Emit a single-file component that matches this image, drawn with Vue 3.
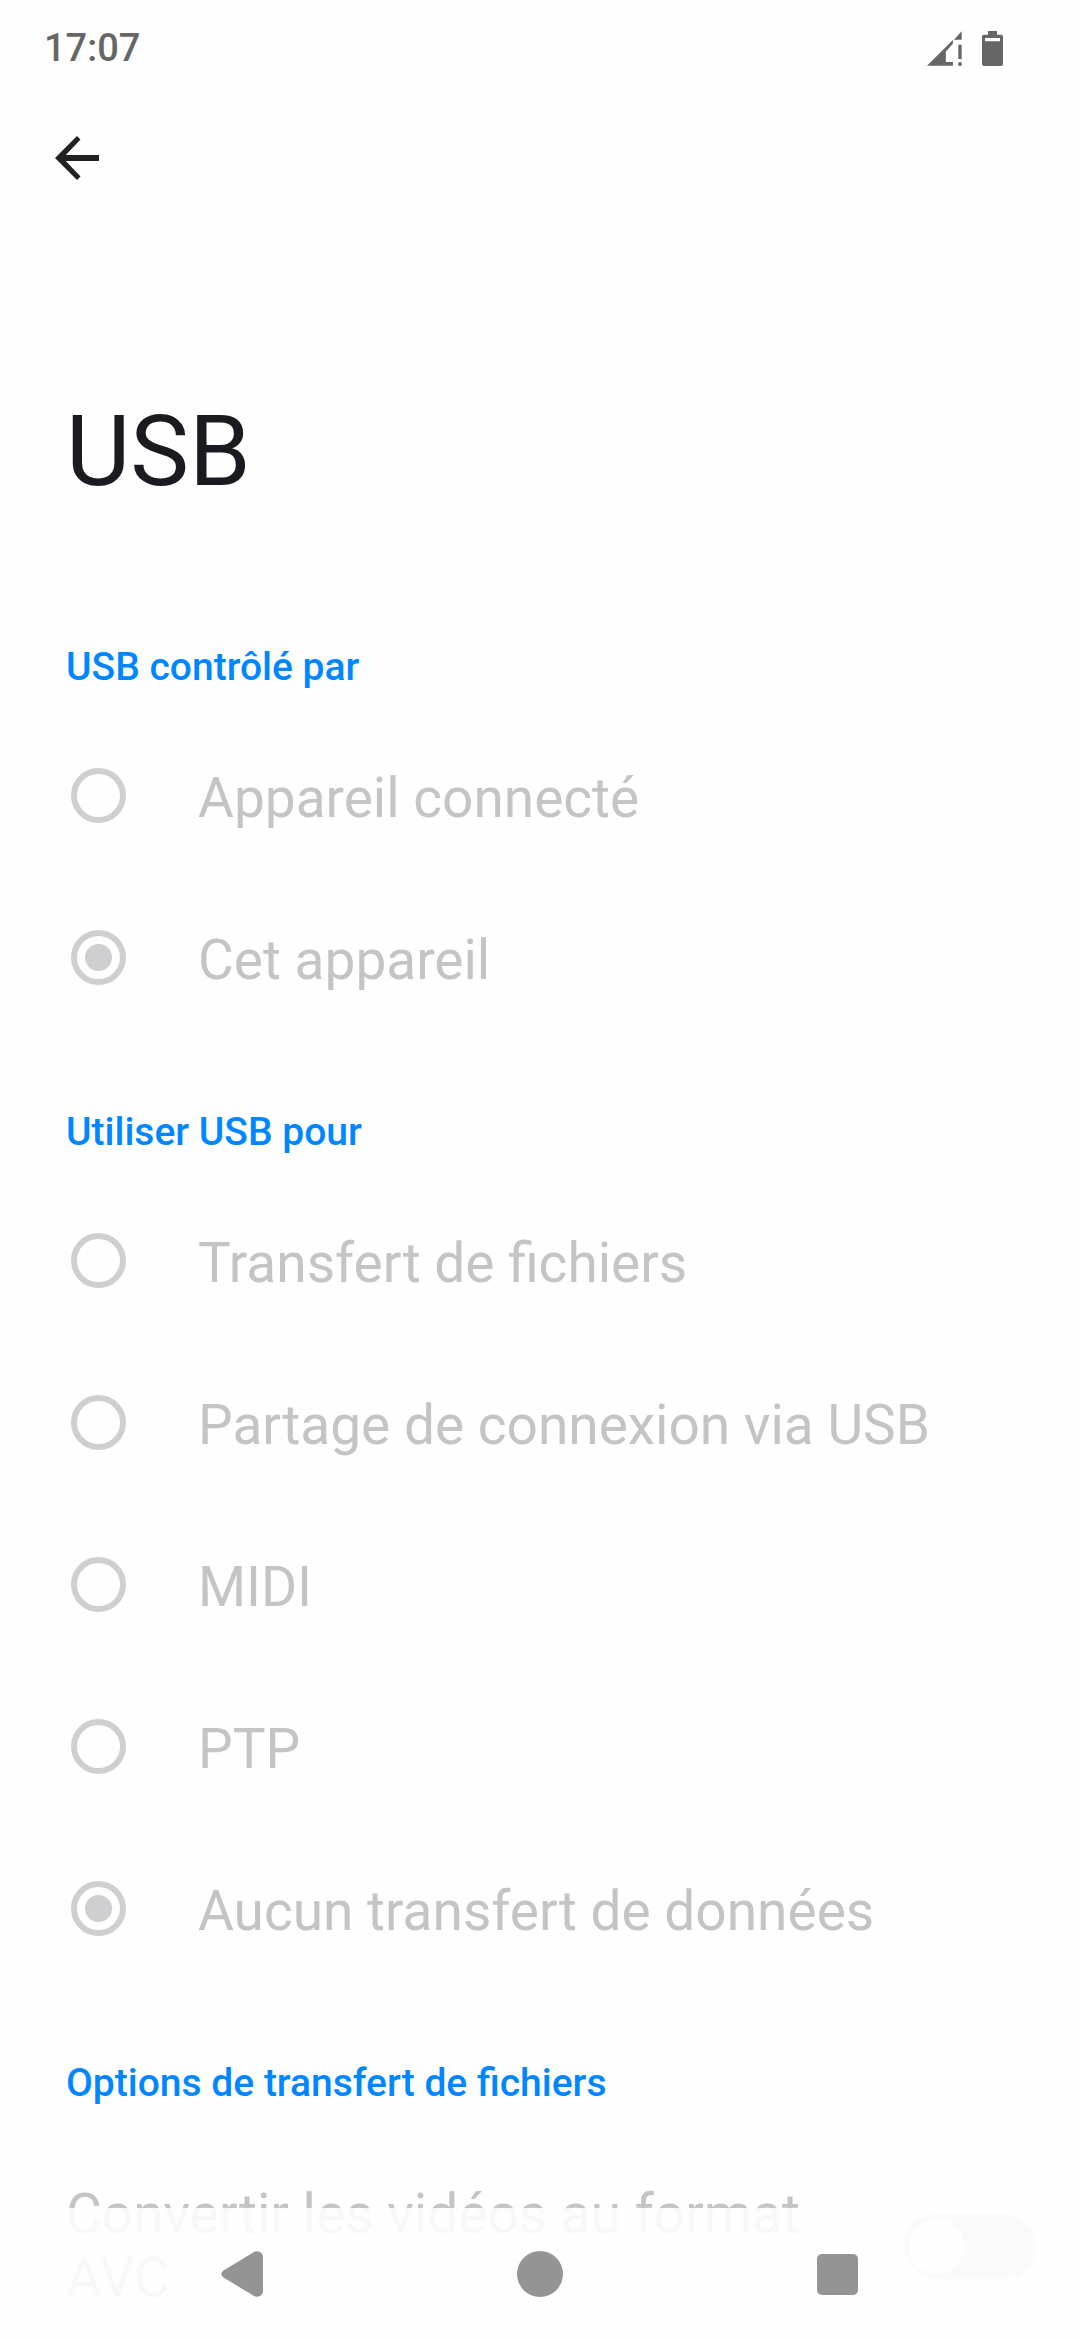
<script setup>
import { ref } from 'vue'

const groups = ref([
  {
    id: 'role',
    title: 'USB contrôlé par',
    selected: 'device',
    options: [
      { value: 'host', label: 'Appareil connecté' },
      { value: 'device', label: 'Cet appareil' },
    ],
  },
  {
    id: 'function',
    title: 'Utiliser USB pour',
    selected: 'none',
    options: [
      { value: 'mtp', label: 'Transfert de fichiers' },
      { value: 'tethering', label: 'Partage de connexion via USB' },
      { value: 'midi', label: 'MIDI' },
      { value: 'ptp', label: 'PTP' },
      { value: 'none', label: 'Aucun transfert de données' },
    ],
  },
])
const transcode = ref(false)
</script>

<template>
  <div class="screen">
    <header class="status">
      <time class="clock">17:07</time>
      <div class="indicators">
        <svg class="signal" viewBox="82 94 104 104" aria-hidden="true">
          <path d="M82 197 159 121V132L138 155V186H159V197ZM162 120 185 95V120ZM175 135H185V177H175ZM175 187H185V197H175Z" />
        </svg>
        <svg class="battery" viewBox="246 91 63 105" aria-hidden="true">
          <path fill-rule="evenodd" d="M264 91H291V102H303Q309 102 309 108V190Q309 196 303 196H252Q246 196 246 190V108Q246 102 252 102H264ZM255 112V122H300V112Z" />
        </svg>
      </div>
    </header>

    <div class="content">
      <div class="appbar">
        <button class="back" type="button" aria-label="Retour">
          <svg viewBox="0 0 44 44" aria-hidden="true">
            <path d="M44 19V25H10.800L25.500 40.500 22 44 0 22 22 0 25.500 3.500 10.800 19Z" />
          </svg>
        </button>
      </div>
      <h1 class="title">USB</h1>

      <section v-for="group in groups" :key="group.id" role="radiogroup" :aria-labelledby="group.id">
        <h2 :id="group.id" class="category">{{ group.title }}</h2>
        <label v-for="option in group.options" :key="option.value" class="row">
          <input
            v-model="group.selected"
            class="radio"
            type="radio"
            :name="group.id"
            :value="option.value"
            disabled
          />
          <span>{{ option.label }}</span>
        </label>
      </section>

      <section>
        <h2 class="category">Options de transfert de fichiers</h2>
        <label class="row switch-row">
          <span class="switch-label">Convertir les vidéos au format AVC</span>
          <input v-model="transcode" class="switch" type="checkbox" role="switch" disabled />
        </label>
      </section>
    </div>

    <nav class="navbar">
      <button type="button" aria-label="Précédent">
        <svg viewBox="0 0 46 46" aria-hidden="true">
          <path d="M3.500 19.500 34 1A6 6 0 0 1 43 6V40A6 6 0 0 1 34 45L3.500 26.500Q-1 23 3.500 19.500Z" />
        </svg>
      </button>
      <button type="button" aria-label="Accueil">
        <svg viewBox="0 0 46 46" aria-hidden="true"><circle cx="23" cy="23" r="23" /></svg>
      </button>
      <button type="button" aria-label="Applications récentes">
        <svg viewBox="0 0 46 46" aria-hidden="true"><rect x="3" y="3" width="41" height="41" rx="5" /></svg>
      </button>
    </nav>
  </div>
</template>

<style>
body {
  margin: 0;
  background: #fefefe;
}
</style>

<style scoped>
.screen {
  position: relative;
  display: flex;
  flex-direction: column;
  height: 100vh;
  overflow: hidden;
  background: #fefefe;
  color: #c4c4c4;
  font-family: Roboto, "Noto Sans", sans-serif;
}

.status {
  display: flex;
  flex: none;
  align-items: center;
  justify-content: space-between;
  box-sizing: border-box;
  height: 80px;
  padding: 16px 77px 0 44px;
  color: #666;
}

.clock {
  font-size: 38px;
  font-weight: 500;
  line-height: 46px;
}

.indicators {
  display: flex;
  align-items: center;
  gap: 20px;
  fill: #666;
}

.signal {
  width: 35px;
  height: 35px;
}

.battery {
  width: 21px;
  height: 35px;
}

.content {
  flex: 1;
  min-height: 0;
  overflow-y: auto;
  scrollbar-width: none;
}

.appbar {
  display: flex;
  align-items: center;
  height: 156px;
  padding: 0 33px;
}

button {
  display: flex;
  align-items: center;
  justify-content: center;
  padding: 0;
  border: 0;
  background: none;
}

.back {
  width: 88px;
  height: 88px;
}

.back svg {
  width: 44px;
  height: 44px;
  fill: #222;
}

.title {
  margin: 0;
  padding: 157px 66px 67px;
  color: #1a1b20;
  font-size: 99px;
  font-weight: 400;
  line-height: 116px;
}

.category {
  margin: 0;
  padding: 68px 66px 27px;
  color: #0087ff;
  font-size: 39px;
  font-weight: 500;
  line-height: 46px;
}

.row {
  display: flex;
  align-items: center;
  padding: 49px 66px;
  font-size: 55px;
  line-height: 64px;
}

.radio {
  flex: none;
  appearance: none;
  box-sizing: border-box;
  width: 55px;
  height: 55px;
  margin: 0 72px 6px 5px;
  border: 6px solid #cfcfd1;
  border-radius: 50%;
}

.radio:checked {
  background: radial-gradient(circle, #cfcfd1 13px, transparent 14px);
}

.switch-row {
  justify-content: space-between;
  gap: 66px;
  padding-right: 44px;
}

.switch {
  flex: none;
  appearance: none;
  box-sizing: border-box;
  width: 132px;
  height: 65px;
  margin: 0;
  padding: 5px;
  border-radius: 33px;
  background: #d6d6d6;
}

.switch::before {
  display: block;
  width: 55px;
  height: 55px;
  border-radius: 50%;
  background: #fefefe;
  content: "";
}

.navbar {
  position: absolute;
  right: 0;
  bottom: 0;
  left: 0;
  display: flex;
  justify-content: center;
  height: 132px;
  background: rgba(254, 254, 254, 0.9);
}

.navbar button {
  width: 297px;
}

.navbar svg {
  width: 46px;
  height: 46px;
  fill: #949494;
}
</style>
